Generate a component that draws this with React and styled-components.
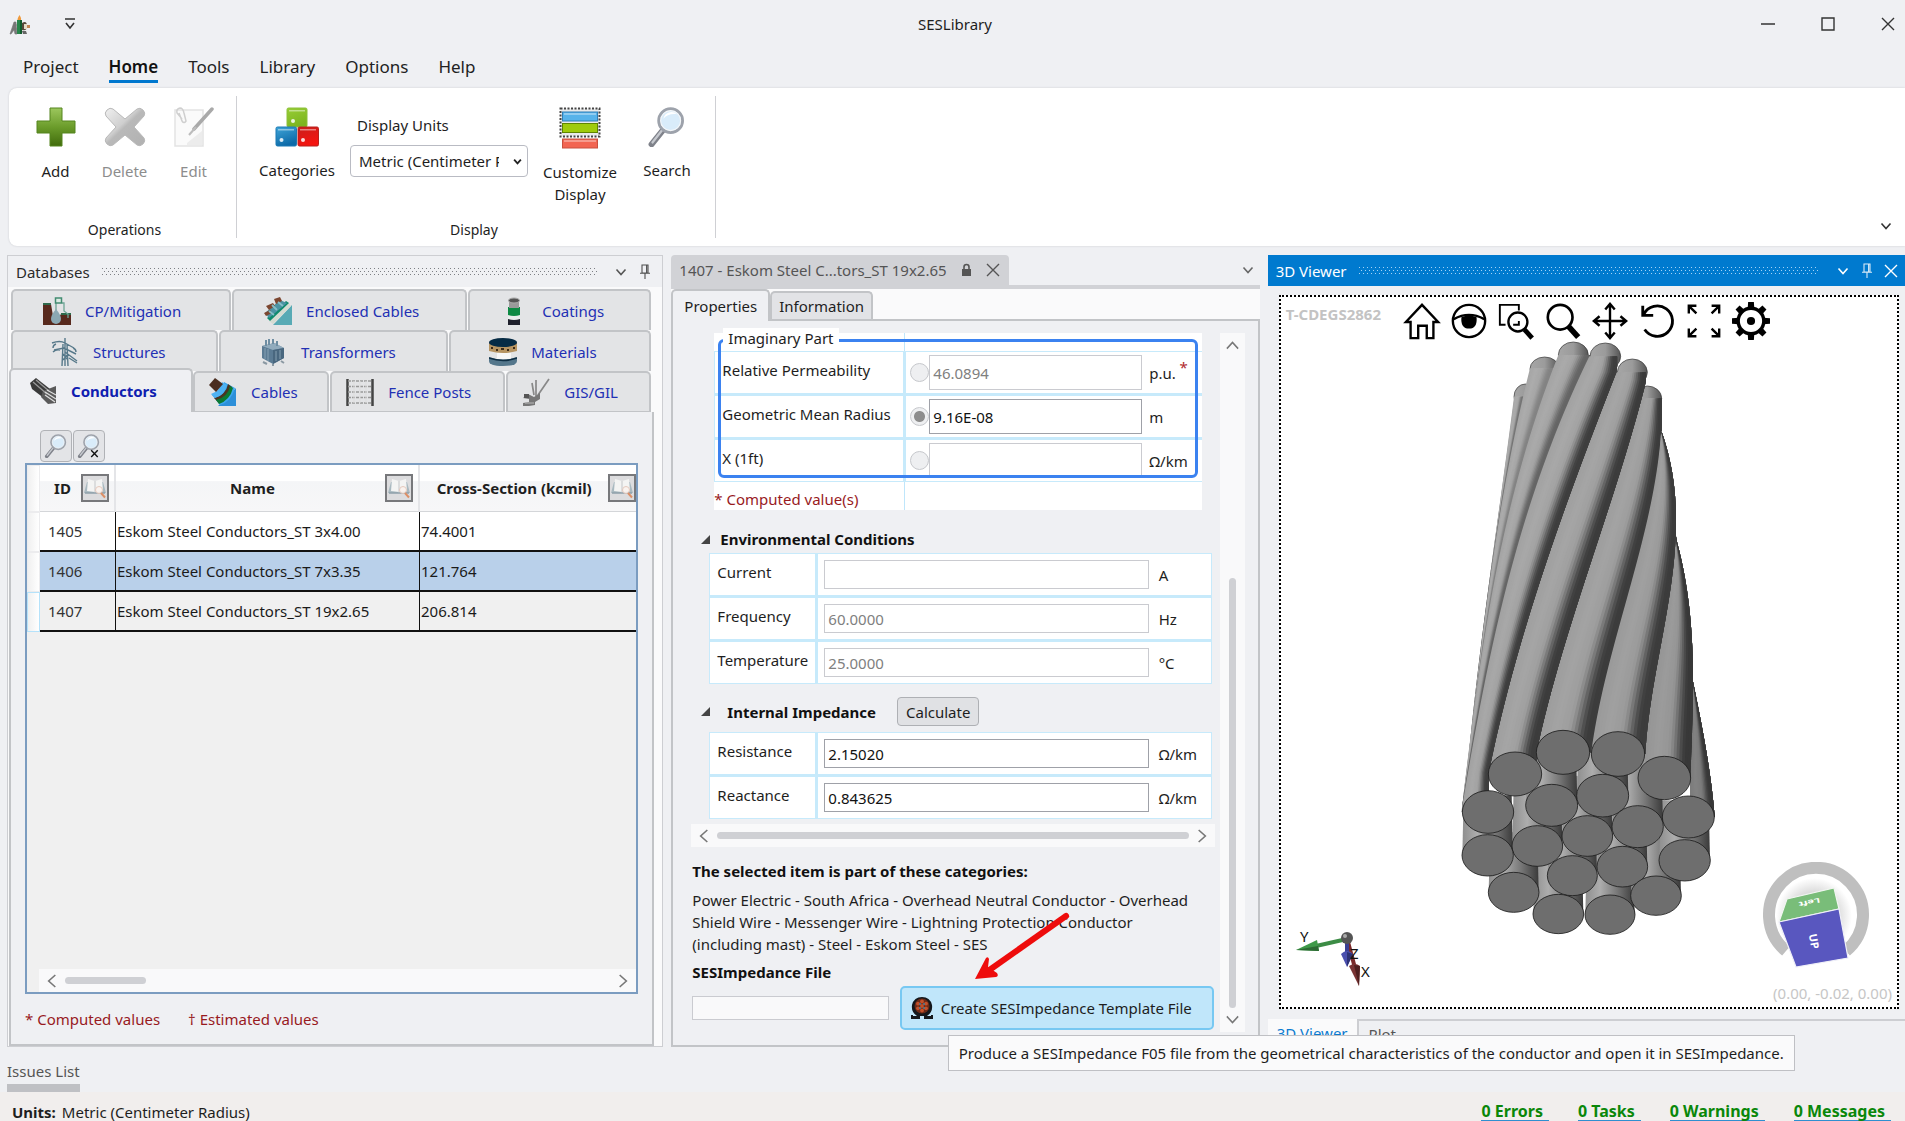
import React from "react";
import styled, { createGlobalStyle, css } from "styled-components";

const Global = createGlobalStyle`
  * { box-sizing: border-box; }
  body { margin: 0; }
  body, button, input, select, table {
    font-family: "Noto Sans", "Open Sans", "Liberation Sans", sans-serif;
    font-size: 15px;
    line-height: 22px;
    color: #1e1e1e;
  }
  button { margin: 0; padding: 0; border: 0; background: none; }
  svg { display: block; flex: none; }
`;

/* ---------- shell ---------- */
const Shell = styled.div`
  height: 100vh;
  display: flex;
  flex-direction: column;
  overflow: hidden;
  background: #eff0f3;
`;
const TitleBar = styled.header`
  display: grid;
  grid-template-columns: 1fr auto 1fr;
  align-items: center;
  height: 48px;
  padding: 0 4px 0 9px;
`;
const TitleLeft = styled.div`
  display: flex;
  align-items: center;
  gap: 32px;
`;
const TitleRight = styled.div`
  display: flex;
  justify-content: flex-end;
  gap: 34px;
`;
const IconButton = styled.button`
  display: grid;
  place-items: center;
  width: ${(p) => p.$w || 24}px;
  height: ${(p) => p.$h || 24}px;
  color: ${(p) => p.$color || "#333"};
`;
const Menu = styled.nav`
  display: flex;
  gap: 30px;
  height: 40px;
  padding: 8px 23px 0;
`;
const MenuLink = styled.a`
  height: 27px;
  font-size: 17px;
  color: #222;
  text-decoration: none;
  ${(p) => p.$active && css`
    font-weight: 600;
    color: #111;
    border-bottom: 3px solid #0078cf;
  `}
`;

/* ---------- ribbon ---------- */
const Ribbon = styled.section`
  display: flex;
  height: 158px;
  margin-left: 9px;
  background: #fff;
  border-radius: 8px 0 0 8px;
  box-shadow: 0 0 2px #c4c6cb;
`;
const RibbonGroup = styled.div`
  display: flex;
  flex-direction: column;
  justify-content: space-between;
  padding: 0 ${(p) => p.$right}px 5px ${(p) => p.$left}px;
  position: relative;
  &::after {
    content: "";
    position: absolute;
    right: 0;
    top: 8px;
    bottom: 8px;
    width: 1px;
    background: #cfd0d4;
  }
`;
const RibbonItems = styled.div`
  display: flex;
`;
const RibbonButton = styled.button`
  display: flex;
  flex-direction: column;
  align-items: center;
  gap: ${(p) => p.$gap || 13}px;
  width: ${(p) => p.$w}px;
  padding-top: 19px;
  color: ${(p) => (p.disabled ? "#8d8d8d" : "#1e1e1e")};
`;
const GroupCaption = styled.div`
  padding-right: ${(p) => p.$inset || 0}px;
  text-align: center;
  font-size: 14px;
`;
const UnitsField = styled.div`
  display: flex;
  flex-direction: column;
  gap: 9px;
  width: 178px;
  margin: 0 8px;
  padding-top: 26px;
`;
const UnitsLabel = styled.label`
  padding-left: 7px;
`;
const SelectWrap = styled.div`
  position: relative;
  svg { position: absolute; right: 6px; top: 12px; pointer-events: none; }
`;
const UnitsSelect = styled.select`
  appearance: none;
  width: 100%;
  height: 32px;
  padding: 0 28px 0 8px;
  border: 1px solid #b9bbc3;
  border-radius: 4px;
  background: #fff;
  overflow: hidden;
`;
const RibbonEnd = styled.div`
  flex: 1;
  display: flex;
  align-items: flex-end;
  justify-content: flex-end;
  padding: 8px 7px;
`;

/* ---------- workspace ---------- */
const Workspace = styled.main`
  flex: 1;
  min-height: 0;
  display: grid;
  grid-template-columns: 656fr 588fr 637fr;
  gap: 8px;
  padding: 9px 0 0 7px;
`;
const Column = styled.section`
  display: flex;
  flex-direction: column;
  min-width: 0;
  min-height: 0;
  border: ${(p) => (p.$frame ? "1px solid #cdced2" : "0")};
`;
const PanelHead = styled.div`
  display: flex;
  align-items: center;
  gap: 12px;
  height: 31px;
  flex: none;
  padding: 0 ${(p) => (p.$active ? 2 : 5)}px 0 8px;
  color: ${(p) => (p.$active ? "#fff" : "#2b2b2b")};
  background: ${(p) => (p.$active ? "#007acf" : "transparent")};
`;
const Grip = styled.div`
  flex: 1;
  height: 8px;
  background-image:
    conic-gradient(from 270deg at 1px 1px, ${(p) => p.$dot} 90deg, transparent 0),
    conic-gradient(from 270deg at 1px 1px, ${(p) => p.$dot} 90deg, transparent 0);
  background-size: 4px 6px;
  background-position: 0 0, 2px 3px;
`;
const HeadButtons = styled.div`
  display: flex;
`;

/* databases panel */
const DbBody = styled.div`
  flex: 1;
  display: flex;
  flex-direction: column;
  min-height: 0;
  padding: 2px 8px 0 1px;
  background: #fafafb;
`;
const TabRow = styled.div`
  display: grid;
  grid-template-columns: ${(p) => p.$cols};
  padding: 0 2px 0 ${(p) => (p.$front ? 0 : 2)}px;
`;
const DbTab = styled.button`
  display: flex;
  align-items: center;
  gap: 14px;
  height: 41px;
  padding-left: ${(p) => p.$pad}px;
  margin-right: 1px;
  color: #2230b4;
  white-space: nowrap;
  background: #e3e4e6;
  border: 2px solid #c2c4c7;
  border-bottom: 0;
  border-radius: 5px 5px 0 0;
  ${(p) => p.$active && css`
    padding-left: 18px;
    font-weight: 700;
    color: #101eb0;
    background: #eff0f3;
    height: 44px;
    margin: -3px 0 0;
    z-index: 1;
  `}
  ${(p) => p.$front && !p.$active && css`border-bottom: 2px solid #c2c4c7; height: 42px;`}
`;
const DbPage = styled.div`
  flex: 1;
  display: flex;
  flex-direction: column;
  min-height: 0;
  margin-top: -1px;
  padding: 18px 14px 14px 14px;
  background: #eff0f3;
  border: 2px solid #c2c4c7;
  border-top: 0;
`;
const ToolButtons = styled.div`
  display: flex;
  gap: 1px;
  padding-left: 15px;
`;
const SquareButton = styled.button`
  display: grid;
  place-items: center;
  width: 32px;
  height: 32px;
  background: #e3e4e7;
  border: 1px solid #b0b2b6;
  border-radius: 4px;
`;
const GridBox = styled.div`
  flex: 1;
  min-height: 0;
  display: flex;
  flex-direction: column;
  margin-top: 1px;
  border: 2px solid #7b9cc0;
  background: #f0f0f0;
  overflow: hidden;
`;
const DataTable = styled.table`
  table-layout: fixed;
  width: 100%;
  border-collapse: separate;
  border-spacing: 0;
`;
const Th = styled.th`
  height: 47px;
  padding: 0 5px 0 4px;
  background: linear-gradient(#fff 35%, #f4f5f7 36%, #f7f7f8);
  border-right: 2px solid #e4e5e8;
  border-bottom: 1px solid #d4d6d9;
  &:last-child { border-right: 0; padding: 0; }
`;
const ThInner = styled.div`
  display: flex;
  align-items: center;
  span { flex: 1; text-align: center; white-space: nowrap; }
`;
const BookButton = styled.button`
  flex: none;
  display: grid;
  place-items: center;
  width: 28px;
  height: 28px;
  background: #dcdcde;
  border: 2px solid #77787b;
`;
const Row = styled.tr`
  background: ${(p) => (p.$tone === "selected" ? "#b9d0ea" : p.$tone === "plain" ? "#f0f0f0" : "#fff")};
`;
const RowHead = styled.td`
  height: 40px;
  padding: 0;
  background: linear-gradient(90deg, #f0f0f0, #fff);
  border: 1px solid ${(p) => (p.$current ? "#b5e2fa" : "#ececee")};
`;
const Td = styled.td`
  height: 40px;
  padding: 0 0 0 ${(p) => (p.$id ? 8 : 1)}px;
  white-space: nowrap;
  overflow: hidden;
  border-right: 1px solid #111;
  border-bottom: 2px solid #111;
  color: ${(p) => (p.$id ? "#333" : "#1a1a1a")};
  &:last-child { border-right: 0; }
`;
const HScroll = styled.div`
  display: flex;
  align-items: center;
  gap: 5px;
  height: 23px;
  padding: 0 5px;
  margin: ${(p) => p.$margin || 0};
  background: #f9f9fa;
`;
const HThumb = styled.div`
  width: ${(p) => p.$w};
  height: 7px;
  border-radius: 4px;
  background: #cfd0d4;
`;
const Spacer = styled.div`
  flex: 1;
`;
const Legend = styled.div`
  display: flex;
  gap: 28px;
  padding: 14px 0 0;
  color: #981a1e;
`;

/* document panel */
const DocHead = styled.div`
  display: flex;
  justify-content: space-between;
  align-items: flex-end;
  border-bottom: 4px solid #d1d2d6;
`;
const DocTab = styled.div`
  display: flex;
  align-items: center;
  gap: 14px;
  height: 30px;
  padding: 0 9px 0 8px;
  background: #d1d2d6;
  border-radius: 4px 4px 0 0;
  color: #555;
  white-space: nowrap;
`;
const PageTabs = styled.div`
  display: flex;
  align-items: flex-end;
  height: 30px;
  background: #fafafb;
  position: relative;
`;
const PageTab = styled.button`
  height: ${(p) => (p.$active ? 32 : 28)}px;
  margin-bottom: ${(p) => (p.$active ? -2 : 0)}px;
  padding: 0 ${(p) => (p.$active ? 11 : 7)}px;
  background: ${(p) => (p.$active ? "#eff0f3" : "#e2e3e6")};
  border: 2px solid #c2c4c7;
  border-bottom: 0;
  border-radius: 5px 5px 0 0;
  position: relative;
  z-index: 1;
`;
const PageBody = styled.div`
  flex: 1;
  display: flex;
  gap: 5px;
  min-height: 0;
  padding: 12px 13px 13px 18px;
  border: 2px solid #c2c4c7;
`;
const Form = styled.div`
  flex: 1;
  min-width: 0;
  display: flex;
  flex-direction: column;
`;
const VScroll = styled.div`
  display: flex;
  flex-direction: column;
  align-items: center;
  width: 25px;
  padding: 5px 0;
  background: #f9f9fa;
`;
const VThumb = styled.div`
  width: 7px;
  height: 430px;
  margin: auto 0 4px;
  border-radius: 4px;
  background: #cfd0d4;
`;
const PartBlock = styled.div`
  position: relative;
  margin: 0 13px 0 23px;
  background: #fff;
`;
const PartStrip = styled.div`
  height: ${(p) => p.$h}px;
  color: #981a1e;
  display: grid;
  grid-template-columns: 190px 1fr;
  align-items: end;
  &::after {
    content: "";
    grid-column: 2;
    align-self: stretch;
    border-left: 1px solid #bfe6fb;
  }
`;
const PartOutline = styled.div`
  position: absolute;
  inset: 6px 4px 32px 4px;
  border: 3px solid #3b82f0;
  border-radius: 6px;
  pointer-events: none;
`;
const PartTitle = styled.div`
  position: absolute;
  left: 9px;
  top: -5px;
  height: 20px;
  line-height: 20px;
  padding: 0 5px;
  background: #fff;
`;
const Properties = styled.div`
  display: grid;
  grid-template-columns: ${(p) => p.$label}px 1fr;
  gap: 3px;
  padding: 1px;
  margin: ${(p) => p.$margin || 0};
  background: #c7eafb;
`;
const PropLabel = styled.label`
  height: 41px;
  padding: 7px 0 0 7px;
  background: #fff;
  white-space: nowrap;
`;
const PropValue = styled.div`
  display: grid;
  grid-template-columns: ${(p) => (p.$radio ? "19px 213px 1fr auto" : "1fr 52px")};
  align-items: center;
  height: 41px;
  padding: 0 ${(p) => (p.$radio ? "14px 0 4px" : "0 0 6px")};
  column-gap: ${(p) => (p.$radio ? 0 : 10)}px;
  background: #fff;
`;
const Radio = styled.input`
  appearance: none;
  width: 19px;
  height: 19px;
  margin: 0;
  border: 1px solid #c6c8cc;
  border-radius: 50%;
  background: ${(p) => (p.checked ? "radial-gradient(#8d8d8d 5px, #eeeff1 6px)" : "#eeeff1")};
`;
const TextBox = styled.input`
  width: 100%;
  height: ${(p) => p.$h || 29}px;
  padding: 0 3px;
  border: 1px solid ${(p) => (p.disabled ? "#cacbd0" : "#9fa1a8")};
  border-radius: 0;
  background: ${(p) => p.$bg || "#fff"};
  color: ${(p) => (p.disabled ? "#808080" : "#111")};
`;
const Unit = styled.span`
  padding: 0 0 0 ${(p) => (p.$indent ? 7 : 0)}px;
`;
const Star = styled.span`
  color: #b02a2e;
  padding-bottom: 12px;
`;
const SectionHead = styled.div`
  display: flex;
  align-items: center;
  padding: ${(p) => p.$pad} 0 ${(p) => p.$bottom} 10px;
  h3 { margin: 0 0 0 ${(p) => p.$gap}px; font-size: 15px; font-weight: 700; color: #111; }
`;
const CalcButton = styled.button`
  height: 29px;
  padding: 0 8px;
  margin-left: 21px;
  background: #e0e1e4;
  border: 1px solid #aeb0b4;
  border-radius: 4px;
`;
const Categories = styled.div`
  position: relative;
  padding: 13px 0 0 1px;
  strong { display: block; color: #111; }
  p { margin: 7px 0 6px; padding-right: 14px; }
`;
const ArrowMark = styled.svg`
  position: absolute;
  right: 140px;
  top: 60px;
`;
const FileRow = styled.div`
  display: flex;
  align-items: center;
  justify-content: space-between;
  gap: 10px;
  padding: 3px 1px 0 0;
`;
const FileBox = styled.div`
  flex: 0 1 197px;
  display: flex;
`;
const CreateWrap = styled.div`
  position: relative;
  z-index: 10;
`;
const CreateButton = styled.button`
  display: flex;
  align-items: center;
  gap: 7px;
  width: 314px;
  height: 44px;
  padding-left: 8px;
  white-space: nowrap;
  background: #c0e6fa;
  border: 2px solid #77c8f2;
  border-radius: 5px;
`;
const Tip = styled.div`
  position: absolute;
  left: 48px;
  top: calc(100% + 5px);
  padding: 6px 10px;
  white-space: nowrap;
  background: #fafafb;
  border: 1px solid #bfc0c4;
`;

/* viewer panel */
const ViewerBody = styled.div`
  flex: 1;
  min-height: 0;
  display: flex;
  padding: 9px 6px 10px 11px;
`;
const Viewport = styled.div`
  flex: 1;
  position: relative;
  display: flex;
  flex-direction: column;
  background: #fff;
  border: 2px dotted #000;
  overflow: hidden;
`;
const ViewTools = styled.div`
  display: flex;
  gap: 9px;
  height: 42px;
  padding: 6px 0 0 5px;
  align-items: center;
`;
const Watermark = styled.span`
  align-self: flex-start;
  width: 108px;
  font-size: 15px;
  font-weight: 700;
  color: #c3c3c3;
`;
const Model = styled.div`
  display: flex;
  justify-content: center;
`;
const Corner = styled.div`
  position: absolute;
  bottom: ${(p) => p.$bottom}px;
  ${(p) => (p.$right !== undefined ? `right: ${p.$right}px;` : `left: ${p.$left}px;`)}
  color: #c6c6c6;
`;
const ViewTabs = styled.div`
  display: flex;
  height: 28px;
`;
const ViewTab = styled.button`
  padding: 0 ${(p) => (p.$active ? 9 : 10)}px;
  color: ${(p) => (p.$active ? "#0b7bd0" : "#555")};
  background: ${(p) => (p.$active ? "#fafafb" : "none")};
  border-top: ${(p) => (p.$active ? 0 : "2px solid #cdced2")};
  border-left: ${(p) => (p.$active ? 0 : "2px solid #cdced2")};
  ${(p) => p.$rest && "flex: 1; text-align: left;"}
`;

/* footer */
const Issues = styled.div`
  height: 45px;
  padding: 13px 7px 0;
`;
const IssuesTab = styled.button`
  height: 32px;
  padding: 0 0 2px;
  display: block;
  border-bottom: 8px solid #bfc0c4;
  color: #555;
  white-space: nowrap;
`;
const StatusBar = styled.footer`
  display: flex;
  justify-content: space-between;
  height: 29px;
  padding: 9px 14px 0 12px;
  background: #f1eeed;
  white-space: nowrap;
  strong { margin-right: 6px; }
`;
const StatusLinks = styled.div`
  display: flex;
  gap: 29px;
`;
const StatusLink = styled.a`
  height: 20px;
  padding-right: 6px;
  color: #0a870a;
  font-size: 16px;
  font-weight: 700;
  text-decoration: none;
  border-bottom: 1px solid #2f8fd0;
  line-height: 20px;
`;

/* ---------- small glyphs ---------- */
const Chevron = ({ dir = "down", w = 12, s = 1.6, color = "currentColor" }) => {
  const rot = { down: 0, up: 180, left: 90, right: 270 }[dir];
  return (
    <svg width={w} height={w} viewBox="0 0 12 12" fill="none" stroke={color} strokeWidth={s}>
      <path d="M1.500 3.500 6 8.500l4.500-5" transform={`rotate(${rot} 6 6)`} />
    </svg>
  );
};
const Pin = () => (
  <svg width="12" height="16" viewBox="0 0 12 16" fill="none" stroke="currentColor" strokeWidth="1.1" opacity=".85">
    <path d="M3 1h6v8H3zM7.6 1v8M1 9.3h10M6 9.5V15" />
  </svg>
);
const Cross = ({ w = 14 }) => (
  <svg width={w} height={w} viewBox="0 0 14 14" stroke="currentColor" strokeWidth="1.4">
    <path d="M1 1l12 12M13 1 1 13" />
  </svg>
);
const Magnifier = ({ w = 28, clear }) => (
  <svg width={w} height={w} viewBox="0 0 40 44">
    <path d="M3 41 16 25" stroke="#7f828a" strokeWidth="6.5" strokeLinecap="round" />
    <path d="M4 39 15 25" stroke="#c6c9cf" strokeWidth="2.5" strokeLinecap="round" />
    <circle cx="24" cy="15" r="13" fill="#d9ecfa" stroke="#9da2ab" strokeWidth="3.4" />
    <circle cx="24" cy="15" r="11" fill="none" stroke="#f4f6f8" strokeWidth="1.2" />
    <path d="M16 13a9 9 0 0 1 15-5c-6-1-12 1-15 5z" fill="#fff" />
    {clear && <path d="M24 30l12 12M36 30 24 42" stroke="#111" strokeWidth="2.6" />}
  </svg>
);
const Book = () => (
  <svg width="24" height="24" viewBox="0 0 24 24">
    <path d="M1 17 4 6h7v11zM23 17 20 6h-7v11z" fill="#a9b9c0" />
    <path d="M4 15 5 3l7 2v11zM20 15 19 3l-7 2v11z" fill="#f4f4f3" />
    <path d="M12 5v11" stroke="#c4c6c8" />
    <path d="M2 17h20" stroke="#8fa1aa" strokeWidth="1.500" />
    <circle cx="16" cy="14" r="3.500" fill="#fbf3ef" opacity=".9" stroke="#e3c5b8" />
    <path d="M18 17l4 4.500" stroke="#dc8f66" strokeWidth="2" />
  </svg>
);

/* ---------- ribbon drawings ---------- */
const AppLogo = () => (
  <svg width="21" height="21" viewBox="0 0 21 21">
    <path d="M1 20 5 8h2l1 12H6l-1-4-3 4zM3 15h5M4 11h4" fill="#777" stroke="#777" strokeWidth=".6" />
    <path d="M8 6h5v14H8z" fill="#27854a" />
    <path d="M11 6h2v14h-2z" fill="#135c2e" />
    <path d="M8.500 6c0-2 1-3 2-5 1 2 2 3 1.500 5z" fill="#ef9a3c" />
    <path d="M13 9c3-2 5-1 5 3s-2 5-5 4z" fill="#57483a" />
    <path d="M15 10h3v5h-3z" fill="#e6dcc8" />
    <path d="M18 11h3v3h-3z" fill="#c08455" />
    <path d="M13 17h4l1 3h-4z" fill="#666" />
  </svg>
);
const AddIcon = () => (
  <svg width="40" height="40" viewBox="0 0 40 40">
    <defs>
      <linearGradient id="plus" x2="0" y2="1">
        <stop offset="0" stopColor="#9cc75d" /><stop offset=".5" stopColor="#6b9c2b" /><stop offset="1" stopColor="#416c0c" />
      </linearGradient>
    </defs>
    <path d="M14 1h12v13h13v12H26v13H14V26H1V14h13z" fill="url(#plus)" stroke="#55851e" strokeLinejoin="round" />
  </svg>
);
const DeleteIcon = () => (
  <svg width="42" height="40" viewBox="0 0 42 40">
    <defs>
      <linearGradient id="del" x2="1" y2="1">
        <stop offset="0" stopColor="#f0f0f0" /><stop offset=".42" stopColor="#cfcfcf" /><stop offset=".5" stopColor="#b9b9b9" /><stop offset="1" stopColor="#b1b1b1" />
      </linearGradient>
    </defs>
    <path d="M2 9Q0 6 3 3t6-1l12 10L33 2q3-2 6 1t1 6L30 20l10 11q2 3-1 6t-6 1L21 28 9 38q-3 2-6-1t-1-6l10-11z" fill="url(#del)" stroke="#b9b9b9" />
  </svg>
);
const EditIcon = () => (
  <svg width="40" height="40" viewBox="0 0 40 40" fill="none">
    <path d="M1 3h28v36H1z" fill="#fafafa" stroke="#e3e3e3" strokeWidth="1.500" />
    <path d="M13 36 28 24v14H13z" fill="#ececec" />
    <path d="M8 12 3 6q-1-4 3-5 3 0 4 5l2 8q-2 3-4 0L5 6" stroke="#cfcfcf" strokeWidth="1.500" />
    <path d="M38 2 20 22" stroke="#a9a9a9" strokeWidth="3.500" strokeLinecap="round" />
    <path d="M22 20 15 28" stroke="#bdbdbd" strokeWidth="2" />
  </svg>
);
const CategoriesIcon = () => (
  <svg width="44" height="40" viewBox="0 0 44 40">
    <defs>
      {[["cg", "#97cd35", "#7db51f"], ["cb", "#3fa5d8", "#0d6aa8"], ["cr", "#c8201c", "#f51410"]].map(([id, a, b]) => (
        <linearGradient id={id} key={id} x2=".4" y2="1"><stop offset="0" stopColor={a} /><stop offset="1" stopColor={b} /></linearGradient>
      ))}
    </defs>
    <rect x="12" y="1" width="20" height="19" rx="1.500" fill="url(#cg)" stroke="#8cc03b" />
    <rect x="1" y="20" width="20.500" height="19" rx="1.500" fill="url(#cb)" stroke="#1a79b4" />
    <rect x="23" y="20" width="20.500" height="19" rx="1.500" fill="url(#cr)" stroke="#b8201c" />
    <g fill="#fff" opacity=".85"><circle cx="18" cy="14" r="2" /><circle cx="6.500" cy="33" r="2" /><circle cx="28" cy="33" r="2" /></g>
    <g fill="#fff" opacity=".45"><path d="M14 3h16v1.500H14zM3 22h16v1.500H3zM25 22h16v1.500H25z" /></g>
  </svg>
);
const CustomizeIcon = () => (
  <svg width="42" height="42" viewBox="0 0 42 42">
    <rect x="1.500" y="1.500" width="39" height="28" fill="#e9eaeb" stroke="#444" strokeWidth="2" strokeDasharray="2 1.500" />
    <rect x="3.500" y="5" width="35" height="9" fill="#57b3ea" stroke="#2f7fb8" />
    <rect x="3.500" y="16.500" width="35" height="9" fill="#9fcb0b" stroke="#5f8500" />
    <rect x="3.500" y="32" width="35" height="9" fill="#f26552" stroke="#c8503f" />
    <path d="M5 7h32M5 34h32" stroke="#fff" opacity=".35" strokeWidth="2" />
  </svg>
);

/* ---------- database tab drawings ---------- */
const TabSvg = ({ children }) => <svg width="28" height="28" viewBox="0 0 28 28">{children}</svg>;
const tabIcons = {
  cp: (
    <TabSvg>
      <path d="M0 7h8l2 12 6 1 2-3h10v11H0z" fill="#57291d" /><path d="M0 6h8v2H0zM18 16h10v2H18z" fill="#2f6a4c" />
      <path d="M13 6v7M19 6h2v8l4 3v4" stroke="#6fa596" fill="none" strokeWidth="1.300" />
      <rect x="12.500" y="1" width="6" height="5" fill="#dcebe4" stroke="#438c72" strokeWidth="1.500" />
      <path d="M13 12q5 6 5 10a5 5 0 0 1-10 0q0-4 5-10z" fill="#8ba8b3" />
    </TabSvg>
  ),
  enclosed: (
    <TabSvg>
      <path d="M28 8v20H9z" fill="#58aab5" />
      <path d="M24 5 27 9 9 27 5 24z" fill="#d4dcd2" />
      <path d="M22 4l3 2L6 24l-3-3z" fill="#0f8a6e" />
      <path d="M16 3l7 3L5 21l-4-5z" fill="#4c93a3" />
      <path d="M2 9l7-3 2 3-6 4zM0 16l6-3 2 3-6 3zM10 2l6-2 2 4-6 3z" fill="#7c4630" />
      <path d="M8 8l5 5M5 14l5 4M14 5l5 4" stroke="#86bfc8" strokeWidth="1.800" />
    </TabSvg>
  ),
  coating: (
    <TabSvg>
      <path d="M8 18h12v10H8z" fill="#1e1f2b" /><path d="M8 17h12v5q-6 2-12 0z" fill="#e8eeec" />
      <path d="M8 10h12v8q-6 2-12 0z" fill="#0c8a43" /><path d="M9 3h10v8H9z" fill="#9a9a9a" />
      <ellipse cx="14" cy="3.500" rx="5.500" ry="2.500" fill="#555" stroke="#aaa" />
    </TabSvg>
  ),
  tower: (
    <TabSvg>
      <g stroke="#57798a" fill="none" strokeWidth="1.400">
        <path d="M14 0v28M12 6 11 28M16 6l1 22M1 5q8-3 13 0l9 5M3 12l10-2 12 6M5 6q-3 1-3 4M22 10q3 1 3 4M14 14l12 9M12 16l5 6M12 22l5-6M2 14q3-3 7-2M18 20l8 5" />
      </g>
    </TabSvg>
  ),
  transformer: (
    <TabSvg>
      <path d="M3 8 15 5l10 5v10l-11 6L3 20z" fill="#5b7b94" /><path d="M3 8l11 4 11-2-9-5z" fill="#91abbd" />
      <path d="M14 12v14l11-6V10z" fill="#49677f" /><path d="M6 10v11M9 11v12M17 13v10M21 12v9" stroke="#86a1b3" />
      <path d="M7 2v6M10 1v6M14 1v5M18 3v5" stroke="#6f8ea3" strokeWidth="2" /><path d="M4 24l4 2M14 26v2M22 23l3 2" stroke="#8b99a3" strokeWidth="2" />
    </TabSvg>
  ),
  materials: (
    <TabSvg>
      <path d="M0 18h28v5q0 5-14 5T0 23z" fill="#55778c" /><path d="M0 12h28v7q-14 5-28 0z" fill="#e3e4e5" />
      <path d="M8 15h14v6H8z" fill="#fff" opacity=".7" />
      <path d="M0 5h28v8q-14 4-28 0z" fill="#b69462" /><path d="M2 10h2M7 12h2M12 11h3M18 12h2M24 10h2" stroke="#3d2b18" strokeWidth="2" />
      <ellipse cx="14" cy="4.500" rx="14" ry="4.500" fill="#062b45" /><path d="M0 20q14 5 28 0" stroke="#0e2e44" fill="none" strokeWidth="1.500" />
    </TabSvg>
  ),
  conductors: (
    <TabSvg>
      <path d="M1 6 7 1l14 11v7l-5 3L3 12z" fill="#3a3a3a" /><path d="M14 14l13-5v17l-8 1-7-7z" fill="#5a5a5a" />
      <path d="M4 5l14 12M7 3l13 11" stroke="#999" strokeWidth="1.300" /><path d="M16 15l11 7M16 18l10 7M18 13l9 5" stroke="#ddd" strokeWidth="1.200" />
    </TabSvg>
  ),
  cables: (
    <TabSvg>
      <path d="M27 10v18H9z" fill="#2c8fd9" />
      <path d="M3 17Q13 14 15 4l11 6Q22 24 11 27z" fill="#3aa6ee" />
      <path d="M5 20q12-3 14-14l4 3Q20 21 9 24z" fill="#4a3420" />
      <path d="M7 22q12-3 14-14l3 2q-3 12-14 16z" fill="#0b7a33" />
      <path d="M2 16q9-3 11-12l5 3Q15 18 6 20z" fill="#4fb2f2" />
      <path d="M0 7 6 0l8 6-7 8z" fill="#4b2e20" />
    </TabSvg>
  ),
  fence: (
    <TabSvg>
      <path d="M1.500 1v27M26.500 1v27" stroke="#444" strokeWidth="2.500" />
      <path d="M2 3h24M2 8.500h24M2 14h24M2 19.500h24M2 25h24" stroke="#999" strokeWidth="1.300" strokeDasharray="3 1" />
      <path d="M8 3v22M14 3v22M20 3v22" stroke="#ddd" />
    </TabSvg>
  ),
  gis: (
    <TabSvg>
      <path d="M12 17 10 5M14 18V2M16 17 27 1" stroke="#888" strokeWidth="1.700" />
      <path d="M1 20l5-4 6 3 6-4v6l-5 3v3l-6 1H1v-3l6-1v-3z" fill="#777" /><path d="M2 16h5v4H2z" fill="#555" /><path d="M3 25h9" stroke="#bbb" />
    </TabSvg>
  ),
};

const OmegaIcon = () => (
  <svg width="24" height="24" viewBox="0 0 24 24">
    <path d="M1 23v-4h2v1h4Q1 16 2 9 4 1 12 1t10 8q1 7-5 11h4v-1h2v4h-9v-3H10v3z" fill="#15181c" />
    <circle cx="12" cy="10" r="7.500" fill="#6b2a17" />
    <g fill="#c4502a">
      {[[12, 10], [12, 5.5], [8, 7.7], [16, 7.7], [8, 12.3], [16, 12.3], [12, 14.5]].map(([x, y]) => <circle key={x + "-" + y} cx={x} cy={y} r="1.900" />)}
    </g>
    <g fill="#4d7e9a"><circle cx="10" cy="8" r="1" /><circle cx="14" cy="12" r="1" /><circle cx="14" cy="8" r="1" /><circle cx="10" cy="12" r="1" /></g>
  </svg>
);

/* ---------- viewer toolbar drawings ---------- */
const viewTools = [
  ["Home", <g strokeWidth="2.500"><path d="M3 21 20 3l17 18h-5v17h-7V25h-9v13H8V21z" /></g>],
  ["View", <g strokeWidth="2.500"><circle cx="20" cy="20" r="17" /><path d="M4 18Q20 9 36 18" /><path d="M12 16q8-3 16 0 1 12-8 12-9 0-8-12z" fill="#000" stroke="none" /></g>],
  ["Zoom window", <g strokeWidth="2"><path d="M9 24H3V3h20v6M23 20v4h-6" /><circle cx="22" cy="21" r="10" strokeWidth="2.500" /><path d="M29 29l8 9" strokeWidth="5" /></g>],
  ["Zoom", <g strokeWidth="2.800"><circle cx="17" cy="16" r="13" /><path d="M26 26l10 11" strokeWidth="6" /></g>],
  ["Pan", <g strokeWidth="2.500"><path d="M20 2v36M3 20h34M15 8l5-6 5 6M15 32l5 6 5-6M9 15l-6 5 6 5M31 15l6 5-6 5" /></g>],
  ["Rotate", <g strokeWidth="3"><path d="M6 13a16 16 0 1 1 1 16" /><path d="M5 4v10h11" /></g>],
  ["Fit", <g strokeWidth="2.500"><path d="M4 12V4h8M4 4l8 8M28 4h8v8M36 4l-8 8M4 28v8h8M4 36l8-8M36 28v8h-8M36 36l-8-8" /></g>],
];
const ToolGlyph = ({ children }) => (
  <svg width="38" height="38" viewBox="0 0 40 40" fill="none" stroke="#000">{children}</svg>
);
const GearGlyph = (
  <g>
    {[0, 45, 90, 135, 180, 225, 270, 315].map((a) => (
      <path key={a} d="M16.500 7 17 0h6l.5 7z" fill="#000" stroke="none" transform={`rotate(${a} 20 20)`} />
    ))}
    <circle cx="20" cy="20" r="13.500" fill="#fff" strokeWidth="3.600" />
    <circle cx="20" cy="20" r="4.300" fill="#000" stroke="none" />
  </g>
);

/* ---------- stranded conductor model ---------- */
/* Each edge is a cubic through four [x, y] samples. */
function at(points, y) {
  const first = points[0][1];
  const last = points[points.length - 1][1];
  const v = Math.min(Math.max(y, first), last);
  return points.reduce((sum, [xi, yi], i) => {
    let w = xi;
    points.forEach(([, yj], j) => {
      if (j !== i) w *= (v - yj) / (yi - yj);
    });
    return sum + w;
  }, 0);
}
const edges = {
  a: [[180, 185], [130, 560], [62, 1090], [25, 1500]],
  b: [[228, 100], [155, 440], [94, 840], [30, 1400]],
  c: [[313, 60], [186, 450], [108, 810], [26, 1400]],
  d: [[408, 60], [228, 510], [116, 930], [22, 1430]],
  e: [[489, 105], [325, 540], [216, 870], [103, 1315]],
  f: [[575, 140], [440, 590], [322, 960], [247, 1250]],
  g: [[622, 280], [582, 545], [502, 850], [412, 1250]],
  h: [[622, 290], [661, 470], [650, 750], [573, 1255]],
  i: [[662, 600], [706, 830], [716, 1040], [708, 1330]],
  j: [[716, 1040], [738, 1150], [764, 1300], [781, 1446]],
};
const rods = [
  { l: edges.i, r: edges.j, y0: 1040, y1: 1446, hi: 130 },
  { l: edges.a, r: edges.b, y0: 185, y1: 1440, hi: 172, cap: [214, 185, 34, 38], lo: 120 },
  { l: edges.b, r: edges.c, y0: 100, y1: 1430, hi: 172, cap: [272, 102, 44, 36], lo: 135 },
  { l: edges.c, r: edges.d, y0: 60, y1: 1430, hi: 170, cap: [358, 60, 45, 39], lo: 105 },
  { l: edges.f, r: edges.g, y0: 190, y1: 1252, hi: 163, cap: [580, 190, 43, 37], lo: 64 },
  { l: edges.e, r: edges.f, y0: 112, y1: 1317, hi: 165, cap: [535, 112, 45, 40], lo: 64 },
  { l: edges.d, r: edges.e, y0: 64, y1: 1431, hi: 168, cap: [454, 64, 46, 40], lo: 66 },
  { l: edges.h, r: edges.i, y0: 600, y1: 1329, hi: 155, lo: 60 },
  { l: edges.g, r: edges.h, y0: 290, y1: 1257, hi: 160, lo: 64 },
];
const faces = [
  [327, 1252, 80, 66], [492, 1257, 80, 67], [183, 1317, 80, 66], [631, 1329, 79, 65], [446, 1382, 78, 64],
  [293, 1411, 78, 63], [102, 1431, 77, 64], [703, 1446, 78, 63], [551, 1475, 77, 63], [400, 1503, 76, 61],
  [250, 1533, 76, 61], [101, 1561, 77, 62], [692, 1576, 77, 62], [505, 1595, 76, 61], [355, 1622, 75, 60],
  [179, 1672, 76, 60], [606, 1682, 76, 59], [313, 1737, 76, 59], [468, 1739, 75, 59],
];
const stubs = faces.filter(([x, y]) => y > 1450 || (x > 200 && x < 650)).reverse();
const STRIPS = 16;
const grey = (v) => `rgb(${v},${v},${v})`;
const tone = (t, hi, lo) => {
  if (t < 0.45) return Math.round(hi - 12 * Math.abs(0.25 - t) * 2);
  const k = Math.min(1, (t - 0.45) / 0.42);
  return Math.round(hi - 4 + (lo - hi) * k * k * (3 - 2 * k));
};
const strip = (rod, t) => {
  const down = [];
  const up = [];
  for (let y = rod.y0; y < rod.y1 + 24; y += 24) {
    const v = Math.min(y, rod.y1);
    const l = at(rod.l, v);
    const r = Math.max(at(rod.r, v), l);
    down.push(`${(l + (r - l) * t).toFixed(1)},${v}`);
    up.unshift(`${(r + 1).toFixed(1)},${v}`);
  }
  return `M${down.concat(up).join("L")}Z`;
};
const ConductorModel = () => (
  <svg width="260" height="604" viewBox="15 12 780 1812" role="img" aria-label="Stranded conductor">
    <defs>
      <linearGradient id="stub"><stop offset="0" stopColor="#8f8f8f" /><stop offset=".3" stopColor="#adadad" /><stop offset=".65" stopColor="#777" /><stop offset="1" stopColor="#3a3a3a" /></linearGradient>
      <linearGradient id="cap"><stop offset="0" stopColor="#a6a6a6" /><stop offset=".5" stopColor="#9b9b9b" /><stop offset="1" stopColor="#555" /></linearGradient>
    </defs>
    {stubs.map(([x, y, rx]) => (
      <path key={`${x}/${y}`} d={`M${x - rx + 1} ${y}l4 -180h${2 * rx - 10}l4 180z`} fill="url(#stub)" />
    ))}
    {rods.map((rod, n) => (
      <g key={n}>
        {rod.cap && <ellipse cx={rod.cap[0]} cy={rod.cap[1]} rx={rod.cap[2]} ry={rod.cap[3]} fill="url(#cap)" stroke="#333" strokeWidth="2" />}
        {Array.from({ length: STRIPS }, (_, s) => (
          <path key={s} d={strip(rod, s / STRIPS)} fill={grey(tone(s / STRIPS, rod.hi, rod.lo || 60))} />
        ))}
      </g>
    ))}
    {faces.map(([x, y, rx, ry]) => (
      <ellipse key={`${x}-${y}`} cx={x} cy={y} rx={rx} ry={ry} fill="#6e6e6e" stroke="#1c1c1c" strokeWidth="2.500" />
    ))}
  </svg>
);
const AxesGlyph = () => (
  <svg width="80" height="72" viewBox="0 -6 80 72" fontSize="15" fill="#111">
    <path d="M51 7 20 14" stroke="#3c8c45" strokeWidth="4" />
    <path d="M0 18 21 8l2 11z" fill="#3f9a49" /><path d="M0 18l22-4 1 5z" fill="#2c6a33" />
    <path d="M52 10 59 36" stroke="#7a2a2a" strokeWidth="4" />
    <path d="M53 34q6-4 11 0l-1 20z" fill="#7a3434" /><path d="M58 33l6 1-1 20z" fill="#4e1f1f" />
    <path d="M51 8v16" stroke="#3a3f93" strokeWidth="4" /><path d="M45 22q6-6 12 0l-6 13z" fill="#4a4fae" /><path d="M51 20l6 2-6 13z" fill="#2d3175" />
    <circle cx="51" cy="6" r="6" fill="#555" /><circle cx="49" cy="4" r="2" fill="#aaa" />
    <text x="4" y="10">Y</text><text x="54" y="27">Z</text><text x="65" y="45">X</text>
  </svg>
);
const CubeGlyph = () => (
  <svg width="108" height="108" viewBox="0 0 108 108">
    <defs><radialGradient id="halo"><stop offset=".3" stopColor="#999" /><stop offset="1" stopColor="#fff" /></radialGradient></defs>
    <path d="M24 89A47 47 0 1 1 84 89" fill="none" stroke="#bfbfbf" strokeWidth="12" />
    <circle cx="52" cy="54" r="38" fill="url(#halo)" opacity=".65" />
    <path d="M25 37 72 26l5 21-60 13z" fill="#79bd79" stroke="#f2f6f2" strokeWidth="1.200" />
    <path d="M17 60 77 47l9 49-52 9z" fill="#5957bf" stroke="#f0f0f8" strokeWidth="1.200" />
    <text transform="translate(47 38) rotate(168) scale(1 .6)" textAnchor="middle" fontSize="11" fontWeight="700" fill="#fff">Left</text>
    <text transform="translate(48 80) rotate(80)" textAnchor="middle" fontSize="11" fontWeight="700" fill="#fff">UP</text>
  </svg>
);

/* ---------- data ---------- */
const menu = ["Project", "Home", "Tools", "Library", "Options", "Help"];
const tabRows = [
  { pad: 30, cols: "221fr 236fr 184fr", tabs: [["CP/Mitigation", "cp"], ["Enclosed Cables", "enclosed"], ["Coatings", "coating"]] },
  { pad: 38, cols: "208fr 230fr 203fr", tabs: [["Structures", "tower"], ["Transformers", "transformer"], ["Materials", "materials"]] },
  { pad: 14, front: true, cols: "184fr 137fr 176fr 146fr", tabs: [["Conductors", "conductors"], ["Cables", "cables"], ["Fence Posts", "fence"], ["GIS/GIL", "gis"]] },
];
const records = [
  ["1405", "Eskom Steel Conductors_ST 3x4.00", "74.4001", "light"],
  ["1406", "Eskom Steel Conductors_ST 7x3.35", "121.764", "selected"],
  ["1407", "Eskom Steel Conductors_ST 19x2.65", "206.814", "plain"],
];
const imaginary = [
  ["Relative Permeability", "46.0894", "p.u.", false, true],
  ["Geometric Mean Radius", "9.16E-08", "m", true, false],
  ["X (1ft)", "", "Ω/km", false, false],
];
const environment = [["Current", "", "A"], ["Frequency", "60.0000", "Hz"], ["Temperature", "25.0000", "°C"]];
const impedance = [["Resistance", "2.15020", "Ω/km"], ["Reactance", "0.843625", "Ω/km"]];

const Field = ({ row: [label, value, unit], disabled }) => {
  const id = label.toLowerCase();
  return (
    <>
      <PropLabel htmlFor={id}>{label}</PropLabel>
      <PropValue>
        <TextBox id={id} defaultValue={value} disabled={disabled} />
        <Unit>{unit}</Unit>
      </PropValue>
    </>
  );
};
const SectionArrow = () => (
  <svg width="9" height="9" viewBox="0 0 9 9"><path d="M9 0v9H0z" fill="#444" /></svg>
);

function DatabasesPanel() {
  return (
    <Column $frame>
      <PanelHead>
        <span>Databases</span>
        <Grip $dot="#7d7f84" />
        <HeadButtons>
          <IconButton aria-label="Panel menu"><Chevron color="#555" /></IconButton>
          <IconButton aria-label="Pin panel"><Pin /></IconButton>
        </HeadButtons>
      </PanelHead>
      <DbBody>
        {tabRows.map((row) => (
          <TabRow key={row.pad} $front={row.front} $cols={row.cols}>
            {row.tabs.map(([name, icon]) => (
              <DbTab key={name} $pad={row.pad} $front={row.front} $active={name === "Conductors"}>
                {tabIcons[icon]}
                {name}
              </DbTab>
            ))}
          </TabRow>
        ))}
        <DbPage>
          <ToolButtons>
            <SquareButton aria-label="Find"><Magnifier w={24} /></SquareButton>
            <SquareButton aria-label="Clear find"><Magnifier w={24} clear /></SquareButton>
          </ToolButtons>
          <GridBox>
            <DataTable>
              <colgroup><col style={{ width: 13 }} /><col style={{ width: 76 }} /><col style={{ width: 304 }} /><col /></colgroup>
              <thead>
                <tr>
                  <RowHead />
                  {["ID", "Name", "Cross-Section (kcmil)"].map((h) => (
                    <Th key={h}><ThInner><span>{h}</span><BookButton aria-label={`Filter ${h}`}><Book /></BookButton></ThInner></Th>
                  ))}
                </tr>
              </thead>
              <tbody>
                {records.map(([id, name, area, rowTone]) => (
                  <Row key={id} $tone={rowTone}>
                    <RowHead $current={rowTone === "plain"} />
                    <Td $id>{id}</Td><Td>{name}</Td><Td>{area}</Td>
                  </Row>
                ))}
              </tbody>
            </DataTable>
            <Spacer />
            <HScroll $margin="0 0 0 12px">
              <Chevron dir="left" w={16} s={1.2} color="#777" />
              <HThumb $w="81px" />
              <Spacer />
              <Chevron dir="right" w={16} s={1.2} color="#777" />
            </HScroll>
          </GridBox>
          <Legend><span>* Computed values</span><span>† Estimated values</span></Legend>
        </DbPage>
      </DbBody>
    </Column>
  );
}

function DocumentPanel() {
  return (
    <Column>
      <DocHead>
        <DocTab>
          1407 - Eskom Steel C...tors_ST 19x2.65
          <svg width="11" height="14" viewBox="0 0 11 14"><path d="M1 6h9v7H1z" fill="#555" /><path d="M3 6V4a2.500 2.500 0 0 1 5 0v2" stroke="#555" fill="none" strokeWidth="1.600" /></svg>
          <Cross />
        </DocTab>
        <IconButton $h={30} aria-label="Documents"><Chevron color="#666" /></IconButton>
      </DocHead>
      <PageTabs>
        <PageTab $active>Properties</PageTab>
        <PageTab>Information</PageTab>
      </PageTabs>
      <PageBody>
        <Form>
          <PartBlock>
            <PartStrip $h={18} />
            <Properties $label={188}>
              {imaginary.map(([label, value, unit, on, star]) => (
                <React.Fragment key={label}>
                  <PropLabel htmlFor={label}>{label}</PropLabel>
                  <PropValue $radio>
                    <Radio type="radio" name="imaginary" aria-label={`Use ${label}`} checked={on} readOnly />
                    <TextBox id={label} $h={35} defaultValue={value} disabled={!on} />
                    <Unit $indent>{unit}</Unit>
                    {star && <Star>*</Star>}
                  </PropValue>
                </React.Fragment>
              ))}
            </Properties>
            <PartStrip $h={28}><span>* Computed value(s)</span></PartStrip>
            <PartOutline />
            <PartTitle>Imaginary Part</PartTitle>
          </PartBlock>
          <SectionHead $pad="18px" $bottom="3px" $gap={10}><SectionArrow /><h3>Environmental Conditions</h3></SectionHead>
          <Properties $label={105} $margin="0 3px 0 18px">
            {environment.map((row) => <Field key={row[0]} row={row} disabled />)}
          </Properties>
          <SectionHead $pad="13px" $bottom="6px" $gap={17}>
            <SectionArrow /><h3>Internal Impedance</h3><CalcButton>Calculate</CalcButton>
          </SectionHead>
          <Properties $label={105} $margin="0 3px 0 18px">
            {impedance.map((row) => <Field key={row[0]} row={row} />)}
          </Properties>
          <HScroll $margin="5px 0 0">
            <Chevron dir="left" w={16} s={1.2} color="#777" />
            <HThumb $w="100%" />
            <Chevron dir="right" w={16} s={1.2} color="#777" />
          </HScroll>
          <Categories>
            <strong>The selected item is part of these categories:</strong>
            <p>Power Electric - South Africa - Overhead Neutral Conductor - Overhead Shield Wire - Messenger Wire - Lightning Protection Conductor (including mast) - Steel - Eskom Steel - SES</p>
            <strong><label htmlFor="sesfile">SESImpedance File</label></strong>
            <FileRow>
              <FileBox><TextBox id="sesfile" $h={24} $bg="#f9f9fa" disabled /></FileBox>
              <CreateWrap>
                <CreateButton aria-describedby="create-tip"><OmegaIcon />Create SESImpedance Template File</CreateButton>
                <Tip id="create-tip" role="tooltip">Produce a SESImpedance F05 file from the geometrical characteristics of the conductor and open it in SESImpedance.</Tip>
              </CreateWrap>
            </FileRow>
            <ArrowMark width="105" height="78" viewBox="0 0 105 78" aria-hidden="true">
              <path d="M96 9 18 64" stroke="#ee0c0c" strokeWidth="6" strokeLinecap="round" />
              <path d="M5 72 16 51q2-2 3 1l-1 8 9 6q2 3-1 4z" fill="#ee0c0c" />
            </ArrowMark>
          </Categories>
        </Form>
        <VScroll>
          <Chevron dir="up" w={15} s={1.2} color="#777" />
          <VThumb />
          <Chevron w={15} s={1.2} color="#777" />
        </VScroll>
      </PageBody>
    </Column>
  );
}

function ViewerPanel() {
  return (
    <Column>
      <PanelHead $active>
        <span>3D Viewer</span>
        <Grip $dot="#a5d3f5" />
        <HeadButtons>
          <IconButton $color="#fff" aria-label="Viewer menu"><Chevron /></IconButton>
          <IconButton $color="#fff" aria-label="Pin viewer"><Pin /></IconButton>
          <IconButton $color="#fff" aria-label="Close viewer"><Cross /></IconButton>
        </HeadButtons>
      </PanelHead>
      <ViewerBody>
        <Viewport>
          <ViewTools>
            <Watermark>T-CDEGS2862</Watermark>
            {viewTools.map(([name, glyph]) => (
              <IconButton key={name} $w={38} $h={38} aria-label={name}><ToolGlyph>{glyph}</ToolGlyph></IconButton>
            ))}
            <IconButton $w={38} $h={38} aria-label="Settings"><ToolGlyph>{GearGlyph}</ToolGlyph></IconButton>
          </ViewTools>
          <Model><ConductorModel /></Model>
          <Corner $left={15} $bottom={9}><AxesGlyph /></Corner>
          <Corner $right={27} $bottom={37}><CubeGlyph /></Corner>
          <Corner $right={5} $bottom={3}>(0.00, -0.02, 0.00)</Corner>
        </Viewport>
      </ViewerBody>
      <ViewTabs>
        <ViewTab $active>3D Viewer</ViewTab>
        <ViewTab $rest>Plot</ViewTab>
      </ViewTabs>
    </Column>
  );
}

export default function App() {
  return (
    <Shell>
      <Global />
      <TitleBar>
        <TitleLeft>
          <AppLogo />
          <IconButton $w={16} aria-label="Quick access">
            <svg width="12" height="12" viewBox="0 0 12 12" fill="none" stroke="#333" strokeWidth="1.600"><path d="M1 1h10M2 5l4 5 4-5" /></svg>
          </IconButton>
        </TitleLeft>
        <span>SESLibrary</span>
        <TitleRight>
          <IconButton $w={26} aria-label="Minimize"><svg width="14" height="2"><path d="M0 1h14" stroke="#333" strokeWidth="1.500" /></svg></IconButton>
          <IconButton $w={26} aria-label="Maximize"><svg width="14" height="14" fill="none"><path d="M1 1h12v12H1z" stroke="#333" strokeWidth="1.400" /></svg></IconButton>
          <IconButton $w={26} aria-label="Close"><Cross /></IconButton>
        </TitleRight>
      </TitleBar>
      <Menu>
        {menu.map((m) => <MenuLink key={m} href="#" $active={m === "Home"}>{m}</MenuLink>)}
      </Menu>
      <Ribbon>
        <RibbonGroup $left={12} $right={9}>
          <RibbonItems>
            <RibbonButton $w={69}><AddIcon />Add</RibbonButton>
            <RibbonButton $w={69} disabled><DeleteIcon />Delete</RibbonButton>
            <RibbonButton $w={69} disabled><EditIcon />Edit</RibbonButton>
          </RibbonItems>
          <GroupCaption>Operations</GroupCaption>
        </RibbonGroup>
        <RibbonGroup $left={15} $right={6}>
          <RibbonItems>
            <RibbonButton $w={90} $gap={12}><CategoriesIcon />Categories</RibbonButton>
            <UnitsField>
              <UnitsLabel htmlFor="units">Display Units</UnitsLabel>
              <SelectWrap>
                <UnitsSelect id="units" defaultValue="cm"><option value="cm">Metric (Centimeter Radius)</option></UnitsSelect>
                <Chevron w={9} s={2.4} color="#222" />
              </SelectWrap>
            </UnitsField>
            <RibbonButton $w={88} $gap={12}><CustomizeIcon />Customize Display</RibbonButton>
            <RibbonButton $w={86} $gap={12}><Magnifier w={40} />Search</RibbonButton>
          </RibbonItems>
          <GroupCaption $inset={14}>Display</GroupCaption>
        </RibbonGroup>
        <RibbonEnd><IconButton aria-label="Collapse ribbon"><Chevron color="#333" /></IconButton></RibbonEnd>
      </Ribbon>
      <Workspace>
        <DatabasesPanel />
        <DocumentPanel />
        <ViewerPanel />
      </Workspace>
      <Issues><IssuesTab>Issues List</IssuesTab></Issues>
      <StatusBar>
        <span><strong>Units:</strong>Metric (Centimeter Radius)</span>
        <StatusLinks>
          {["0 Errors", "0 Tasks", "0 Warnings", "0 Messages"].map((s) => <StatusLink key={s} href="#">{s}</StatusLink>)}
        </StatusLinks>
      </StatusBar>
    </Shell>
  );
}
